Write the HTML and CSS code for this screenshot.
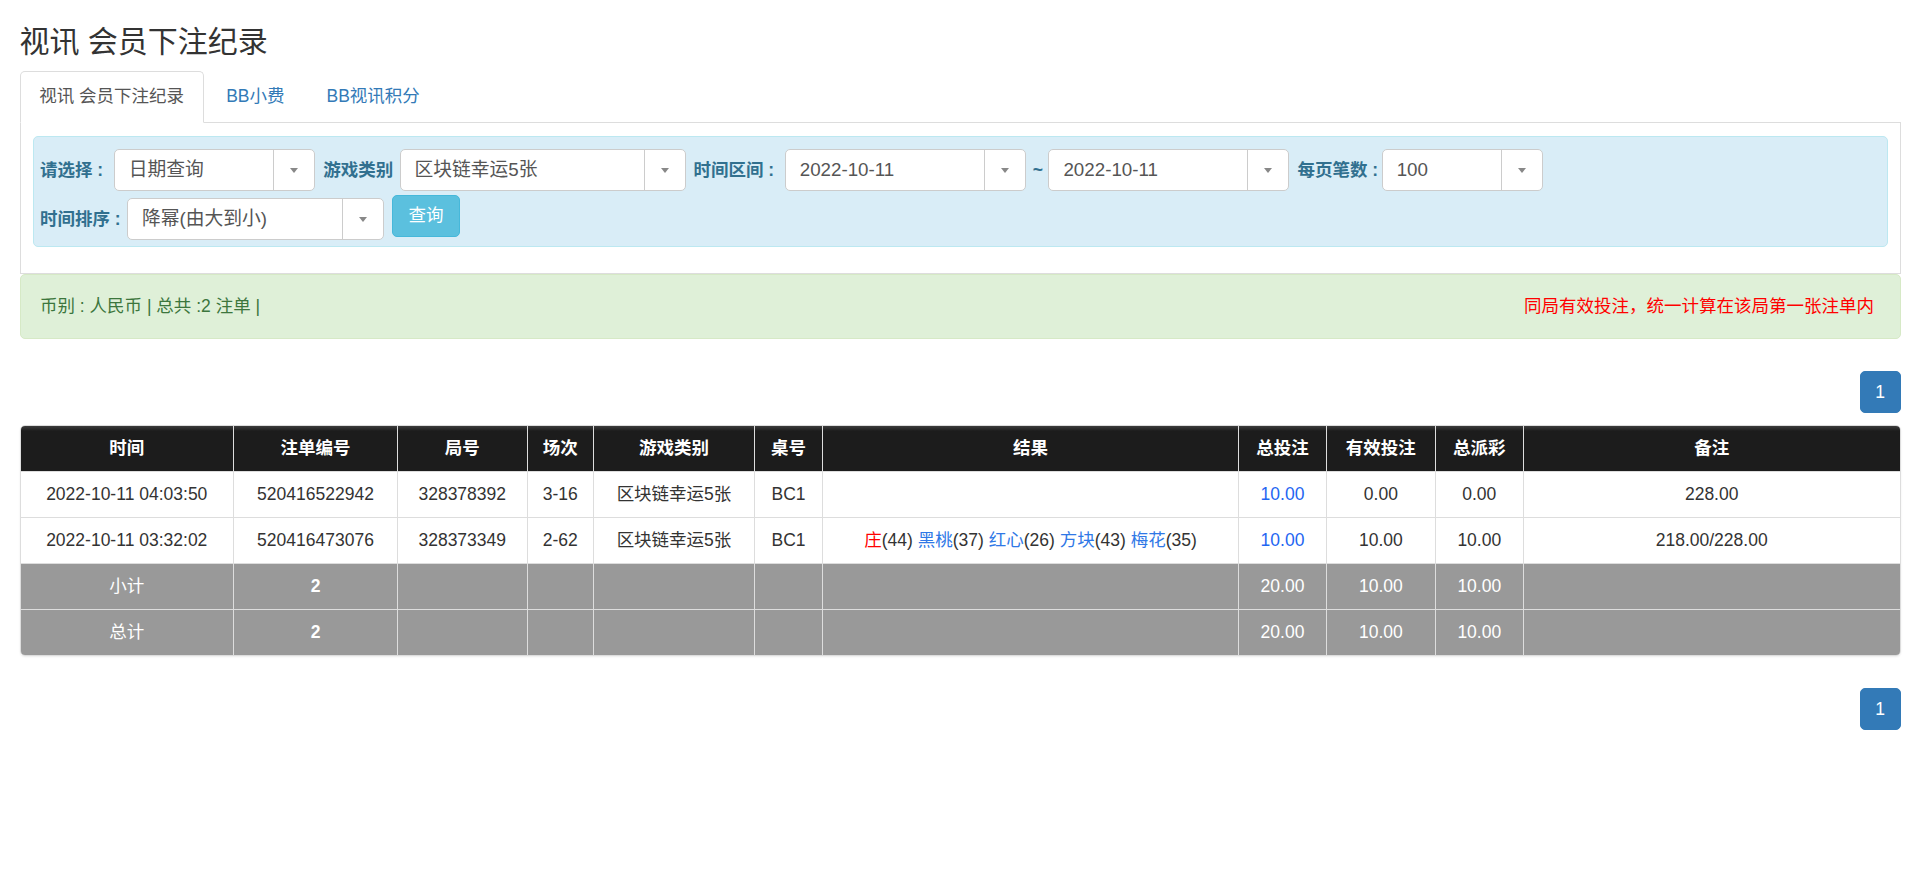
FILE: index.html
```html
<!DOCTYPE html>
<html lang="zh-CN">
<head>
<meta charset="utf-8">
<title>视讯 会员下注纪录</title>
<link rel="stylesheet" href="styles.css">
</head>
<body>
<div class="page">
  <h3 class="title">视讯 会员下注纪录</h3>
  <ul class="tabs">
    <li class="tab active">视讯 会员下注纪录</li>
    <li class="tab">BB小费</li>
    <li class="tab">BB视讯积分</li>
  </ul>
  <div class="tab-panel">
    <div class="filter">
      <div class="filter-row">
        <span class="flabel gap-wide">请选择 :</span>
        <div class="sel w-mode"><span class="sel-val">日期查询</span><span class="sel-arrow"></span></div>
        <span class="flabel">游戏类别</span>
        <div class="sel w-game"><span class="sel-val">区块链幸运5张</span><span class="sel-arrow"></span></div>
        <span class="flabel gap-wide">时间区间 :</span>
        <div class="sel w-date before-tilde"><span class="sel-val">2022-10-11</span><span class="sel-arrow"></span></div>
        <span class="tilde">~</span>
        <div class="sel w-date"><span class="sel-val">2022-10-11</span><span class="sel-arrow"></span></div>
        <span class="flabel gap-narrow">每页笔数 :</span>
        <div class="sel w-size"><span class="sel-val">100</span><span class="sel-arrow"></span></div>
      </div>
      <div class="filter-row second">
        <span class="flabel">时间排序 :</span>
        <div class="sel w-sort"><span class="sel-val">降幂(由大到小)</span><span class="sel-arrow"></span></div>
        <button class="btn-query" type="button">查询</button>
      </div>
    </div>
  </div>
  <div class="alert">
    <span class="alert-info">币别 : 人民币 | 总共 :2 注单 |</span>
    <span class="alert-note">同局有效投注，统一计算在该局第一张注单内</span>
  </div>
  <div class="pager"><span class="page-btn">1</span></div>
  <div class="table-wrap">
    <table class="records">
      <colgroup>
        <col class="c-time"><col class="c-no"><col class="c-round"><col class="c-scene"><col class="c-game"><col class="c-desk"><col class="c-result"><col class="c-bet"><col class="c-valid"><col class="c-pay"><col>
      </colgroup>
      <thead>
        <tr><th>时间</th><th>注单编号</th><th>局号</th><th>场次</th><th>游戏类别</th><th>桌号</th><th>结果</th><th>总投注</th><th>有效投注</th><th>总派彩</th><th>备注</th></tr>
      </thead>
      <tbody>
        <tr>
          <td>2022-10-11 04:03:50</td><td>520416522942</td><td>328378392</td><td>3-16</td><td>区块链幸运5张</td><td>BC1</td><td></td><td class="bet">10.00</td><td>0.00</td><td>0.00</td><td>228.00</td>
        </tr>
        <tr>
          <td>2022-10-11 03:32:02</td><td>520416473076</td><td>328373349</td><td>2-62</td><td>区块链幸运5张</td><td>BC1</td>
          <td><span class="r-red">庄</span>(44) <span class="r-blue">黑桃</span>(37) <span class="r-blue">红心</span>(26) <span class="r-blue">方块</span>(43) <span class="r-blue">梅花</span>(35)</td>
          <td class="bet">10.00</td><td>10.00</td><td>10.00</td><td>218.00/228.00</td>
        </tr>
        <tr class="sum">
          <td>小计</td><td class="strong">2</td><td></td><td></td><td></td><td></td><td></td><td>20.00</td><td>10.00</td><td>10.00</td><td></td>
        </tr>
        <tr class="sum">
          <td>总计</td><td class="strong">2</td><td></td><td></td><td></td><td></td><td></td><td>20.00</td><td>10.00</td><td>10.00</td><td></td>
        </tr>
      </tbody>
    </table>
  </div>
  <div class="pager bottom"><span class="page-btn">1</span></div>
</div>
</body>
</html>
```

FILE: styles.css
```css
html, body {
  margin: 0;
  padding: 0;
  background: #fff;
}

body {
  font-family: "Liberation Sans", "Noto Sans CJK SC", sans-serif;
  font-size: 17.5px;
  line-height: 25px;
  color: #333;
}

.page {
  padding: 0 19.5px;
}

.title {
  margin: 25px 0 12.5px;
  font-size: 30px;
  line-height: 33px;
  font-weight: 400;
  color: #333;
}

/* tabs */
.tabs {
  display: flex;
  list-style: none;
  margin: 0;
  padding: 0;
  border-bottom: 1px solid #ddd;
}

.tab {
  padding: 12.5px 18.75px;
  line-height: 25px;
  margin-right: 2.5px;
  margin-bottom: -1px;
  border: 1px solid transparent;
  border-radius: 5px 5px 0 0;
  color: #337ab7;
  font-size: 17.5px;
}

.tab.active {
  color: #555;
  background: #fff;
  border-color: #ddd;
  border-bottom-color: #fff;
}

.tab-panel {
  border: 1px solid #ddd;
  border-top: none;
  padding: 13.5px 12px 26px;
}

/* filter well */
.filter {
  background: #d9edf7;
  border: 1px solid #bce8f1;
  border-radius: 5px;
  padding: 12px 6px 6px 6.5px;
}

.filter-row {
  display: flex;
  align-items: flex-start;
}

.filter-row.second {
  margin-top: 7.4px;
}

.flabel {
  font-weight: 700;
  color: #31708f;
  font-size: 17.5px;
  line-height: 42px;
  margin-right: 6.3px;
  white-space: nowrap;
}

.flabel.gap-wide {
  margin-right: 10.5px;
}

.flabel.gap-narrow {
  margin-right: 3.5px;
}

.tilde {
  font-weight: 700;
  color: #31708f;
  line-height: 42px;
  margin: 0 5.5px 0 0;
}

.sel {
  display: flex;
  box-sizing: border-box;
  height: 42px;
  border: 1px solid #ccc;
  border-radius: 5px;
  background: #fff;
  margin-right: 8px;
  flex: none;
}

.sel.before-tilde {
  margin-right: 7px;
}

.sel-val {
  flex: 1;
  padding-left: 14px;
  font-size: 18.75px;
  line-height: 40px;
  color: #555;
  white-space: nowrap;
  overflow: hidden;
}

.sel-arrow {
  width: 40px;
  border-left: 1px solid #ccc;
  display: flex;
  align-items: center;
  justify-content: center;
}

.sel-arrow::after {
  content: "";
  width: 0;
  height: 0;
  border-left: 4px solid transparent;
  border-right: 4px solid transparent;
  border-top: 5px solid #888;
}

.w-mode { width: 201.5px; }
.w-game { width: 286px; }
.w-date { width: 241px; }
.w-size { width: 161.5px; }
.w-sort { width: 257px; }

.btn-query {
  box-sizing: border-box;
  height: 41.5px;
  margin-top: -3.4px;
  padding: 0 15.5px;
  background: #5bc0de;
  border: 1px solid #46b8da;
  border-radius: 5px;
  color: #fff;
  font-family: "Liberation Sans", "Noto Sans CJK SC", sans-serif;
  font-size: 17.5px;
  line-height: 25px;
}

/* alert */
.alert {
  display: flex;
  justify-content: space-between;
  align-items: center;
  background: #dff0d8;
  border: 1px solid #d6e9c6;
  border-radius: 5px;
  padding: 19px 25.5px 19px 19.5px;
  line-height: 25px;
  font-size: 17.5px;
}

.alert-info {
  color: #3c763d;
}

.alert-note {
  color: #ff0000;
}

/* pagination */
.pager {
  display: flex;
  justify-content: flex-end;
  margin-top: 31.5px;
}

.pager.bottom {
  margin-top: 32px;
}

.page-btn {
  box-sizing: border-box;
  width: 41px;
  height: 42px;
  background: #337ab7;
  border: 1px solid #337ab7;
  border-radius: 5px;
  color: #fff;
  font-size: 17.5px;
  line-height: 40px;
  text-align: center;
}

/* table */
.table-wrap {
  margin-top: 12.5px;
  border: 1px solid #ddd;
  border-radius: 5px;
  box-shadow: 0 1px 2px rgba(0, 0, 0, 0.08);
  overflow: hidden;
}

.records {
  width: 100%;
  table-layout: fixed;
  border-collapse: collapse;
  border-style: hidden;
}

.c-time { width: 213px; }
.c-no { width: 164px; }
.c-round { width: 129.5px; }
.c-scene { width: 66.5px; }
.c-game { width: 161px; }
.c-desk { width: 68px; }
.c-result { width: 416px; }
.c-bet { width: 88px; }
.c-valid { width: 108.7px; }
.c-pay { width: 88.2px; }

.records th,
.records td {
  padding: 10px 4px;
  line-height: 25px;
  border: 1px solid #ddd;
  text-align: center;
  font-size: 17.5px;
  white-space: nowrap;
}

.records th {
  background: linear-gradient(to bottom, #3c3c3c 0, #1c1c1c 5px, #1c1c1c 100%);
  color: #fff;
  font-weight: 700;
  border-color: #ddd;
}

.records td {
  color: #333;
  background: #fff;
}

.records td.bet {
  color: #1f66f2;
}

.r-red {
  color: #ff0000;
}

.r-blue {
  color: #2f78e6;
}

.records tr.sum td {
  background: #999;
  color: #fff;
}

.records tr.sum td.strong {
  font-weight: 700;
}
```
